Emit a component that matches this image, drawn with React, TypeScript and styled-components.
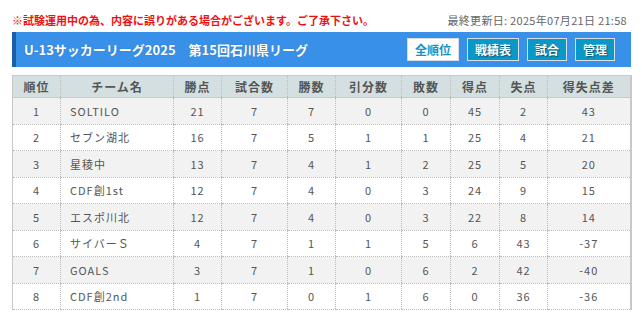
import React from "react";
import styled, { createGlobalStyle } from "styled-components";

const Global = createGlobalStyle`
  html, body { margin: 0; padding: 0; background: #fff; }
  body { font-family: "Noto Sans CJK JP", "Noto Sans", sans-serif; }
`;

const Page = styled.div`
  width: 642px;
  padding: 0 11px 0 12px;
  box-sizing: border-box;
`;

const InfoRow = styled.div`
  display: flex;
  justify-content: space-between;
  align-items: center;
  height: 20px;
  padding-top: 10px;
  margin-bottom: 2px;
  font-size: 11px;
  line-height: 20px;
`;

const Warning = styled.span`
  color: #ee1111;
  font-weight: bold;
`;

const Updated = styled.span`
  color: #666;
  letter-spacing: 0.3px;
  padding-right: 4px;
`;

const TitleBar = styled.div`
  display: flex;
  align-items: center;
  justify-content: space-between;
  height: 35px;
  background: #3890e8;
  border-left: 4px solid #1c5ea8;
  padding: 0 16px 0 8px;
  box-sizing: border-box;
`;

const Title = styled.h1`
  margin: 0;
  color: #fff;
  font-size: 13px;
  font-weight: bold;
  text-shadow: 0 0 1px rgba(0, 0, 0, 0.25);
`;

const Nav = styled.div`
  display: flex;
  gap: 8px;
  align-items: center;
`;

const NavButton = styled.span<{ $active?: boolean }>`
  display: inline-flex;
  align-items: center;
  justify-content: center;
  height: 21px;
  padding: 0 7px;
  font-size: 12px;
  font-weight: bold;
  border: 1px solid #d8dde2;
  background: ${(p) => (p.$active ? "#fff" : "#0a98c8")};
  color: ${(p) => (p.$active ? "#1a8fc4" : "#fff")};
  text-shadow: ${(p) => (p.$active ? "none" : "1px 1px 1px rgba(0,0,0,0.45)")};
`;

const Table = styled.table`
  margin-top: 8px;
  width: 619px;
  border-collapse: collapse;
  table-layout: fixed;
  border-top: 1px solid #c8c8c8;
  border-left: 1px solid #c8c8c8;
  border-right: 2px solid #c8c8c8;
  font-size: 11px;
  color: #555;
`;

const HeadCell = styled.th`
  height: 21px;
  padding: 0;
  background: #d3dfe0;
  color: #555;
  font-weight: bold;
  font-size: 12px;
  letter-spacing: 1px;
  text-align: center;
  border-left: 1px dotted #bbb;
  border-bottom: 1px solid #c8c8c8;
`;

const Row = styled.tr<{ $odd: boolean }>`
  background: ${(p) => (p.$odd ? "#f2f2f2" : "#fff")};
`;

const Cell = styled.td<{ $left?: boolean }>`
  height: 25.5px;
  padding: 0 0 0 ${(p) => (p.$left ? "9px" : "0")};
  text-align: ${(p) => (p.$left ? "left" : "center")};
  letter-spacing: 1px;
  border-left: 1px dotted #bbb;
  border-bottom: 1px dotted #bbb;
`;

const widths = [48, 113, 48, 66, 48, 66, 49, 49, 48, 83];
const headers = ["順位", "チーム名", "勝点", "試合数", "勝数", "引分数", "敗数", "得点", "失点", "得失点差"];

const rows: (string | number)[][] = [
  [1, "SOLTILO", 21, 7, 7, 0, 0, 45, 2, 43],
  [2, "セブン湖北", 16, 7, 5, 1, 1, 25, 4, 21],
  [3, "星稜中", 13, 7, 4, 1, 2, 25, 5, 20],
  [4, "CDF創1st", 12, 7, 4, 0, 3, 24, 9, 15],
  [5, "エスポ川北", 12, 7, 4, 0, 3, 22, 8, 14],
  [6, "サイバーＳ", 4, 7, 1, 1, 5, 6, 43, -37],
  [7, "GOALS", 3, 7, 1, 0, 6, 2, 42, -40],
  [8, "CDF創2nd", 1, 7, 0, 1, 6, 0, 36, -36],
];

export default function App() {
  return (
    <Page>
      <Global />
      <InfoRow>
        <Warning>※試験運用中の為、内容に誤りがある場合がございます。ご了承下さい。</Warning>
        <Updated>最終更新日: 2025年07月21日 21:58</Updated>
      </InfoRow>
      <TitleBar>
        <Title>U-13サッカーリーグ2025　第15回石川県リーグ</Title>
        <Nav>
          <NavButton $active>全順位</NavButton>
          <NavButton>戦績表</NavButton>
          <NavButton>試合</NavButton>
          <NavButton>管理</NavButton>
        </Nav>
      </TitleBar>
      <Table>
        <colgroup>
          {widths.map((w, i) => (
            <col key={i} style={{ width: w }} />
          ))}
        </colgroup>
        <thead>
          <tr>
            {headers.map((h) => (
              <HeadCell key={h}>{h}</HeadCell>
            ))}
          </tr>
        </thead>
        <tbody>
          {rows.map((r, i) => (
            <Row key={i} $odd={i % 2 === 0}>
              {r.map((v, j) => (
                <Cell key={j} $left={j === 1}>
                  {v}
                </Cell>
              ))}
            </Row>
          ))}
        </tbody>
      </Table>
    </Page>
  );
}
